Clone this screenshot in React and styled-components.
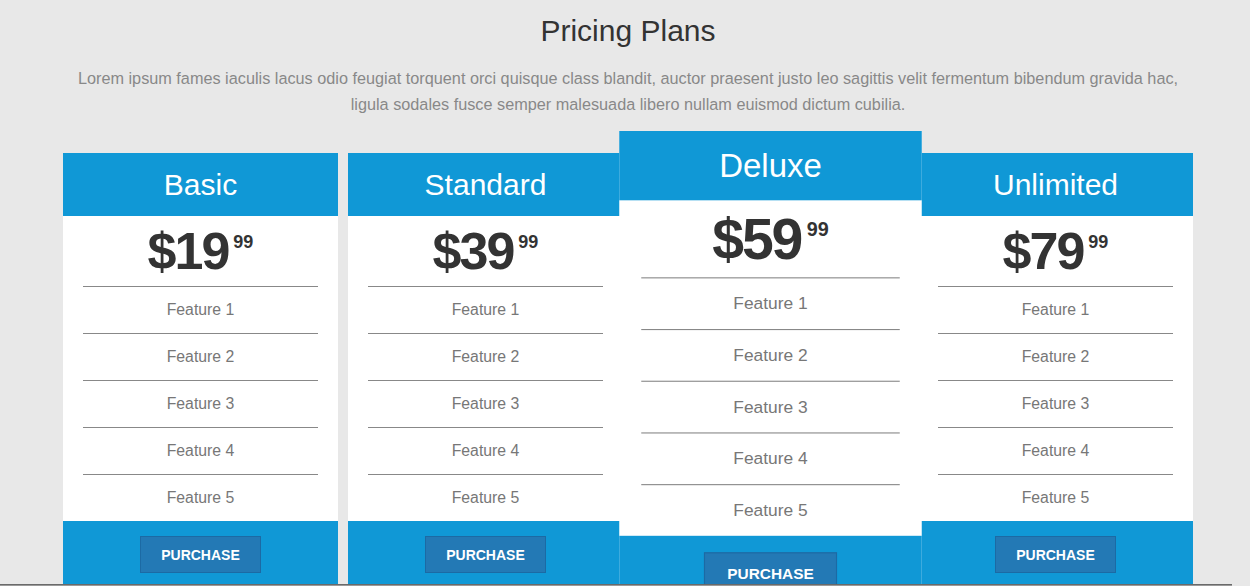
import React from "react";
import styled, { createGlobalStyle } from "styled-components";

const GlobalStyle = createGlobalStyle`
  html, body {
    margin: 0;
    padding: 0;
    overflow: hidden;
    background: #e8e8e8;
    font-family: "Liberation Sans", Arial, sans-serif;
  }
`;

const plans = [
  { name: "Basic", dollars: "19", cents: "99" },
  { name: "Standard", dollars: "39", cents: "99" },
  { name: "Deluxe", dollars: "59", cents: "99", featured: true },
  { name: "Unlimited", dollars: "79", cents: "99" }
];

const features = ["Feature 1", "Feature 2", "Feature 3", "Feature 4", "Feature 5"];

const App = () => {
  return (
    <>
      <GlobalStyle />
      <Page>
        <Title>Pricing Plans</Title>
        <Intro>
          Lorem ipsum fames iaculis lacus odio feugiat torquent orci quisque class blandit, auctor
          praesent justo leo sagittis velit fermentum bibendum gravida hac, ligula sodales fusce
          semper malesuada libero nullam euismod dictum cubilia.
        </Intro>
        <Plans>
          {plans.map(plan => (
            <Card key={plan.name} featured={plan.featured}>
              <CardHeader>{plan.name}</CardHeader>
              <PriceBox>
                <Dollars>${plan.dollars}</Dollars>
                <Cents>{plan.cents}</Cents>
              </PriceBox>
              <FeatureList>
                {features.map(f => (
                  <FeatureItem key={f}>{f}</FeatureItem>
                ))}
              </FeatureList>
              <CardFooter>
                <PurchaseButton>Purchase</PurchaseButton>
              </CardFooter>
            </Card>
          ))}
        </Plans>
      </Page>
      <BottomEdge />
    </>
  );
};

export default App;

const Page = styled.div`
  display: flex;
  flex-direction: column;
  align-items: center;
  padding: 13px 0 0 6px;
`;

const Title = styled.h1`
  margin: 0;
  font-size: 30px;
  line-height: 36px;
  font-weight: normal;
  color: #333;
`;

const Intro = styled.p`
  margin: 16px 0 0;
  max-width: 1120px;
  text-align: center;
  font-size: 16.25px;
  line-height: 26px;
  color: #888;
`;

const Plans = styled.div`
  display: flex;
  gap: 10px;
  margin-top: 36px;
`;

const Card = styled.div`
  width: 275px;
  height: 440px;
  display: flex;
  flex-direction: column;
  background: #fff;
  position: relative;
  z-index: ${p => (p.featured ? 2 : 0)};
  transform: ${p => (p.featured ? "scale(1.1)" : "none")};
`;

const CardHeader = styled.div`
  height: 63px;
  display: flex;
  align-items: center;
  justify-content: center;
  background: #1098d6;
  color: #fff;
  font-size: 30px;
`;

const PriceBox = styled.div`
  height: 70px;
  display: flex;
  align-items: center;
  justify-content: center;
  color: #333;
  font-weight: bold;
`;

const Dollars = styled.span`
  font-size: 52px;
  line-height: 52px;
  letter-spacing: -2px;
`;

const Cents = styled.span`
  align-self: flex-start;
  margin: 17px 0 0 5px;
  font-size: 18px;
  line-height: 18px;
`;

const FeatureList = styled.ul`
  list-style: none;
  margin: 0 20px;
  padding: 0;
`;

const FeatureItem = styled.li`
  height: 46px;
  border-top: 1px solid #888;
  display: flex;
  align-items: center;
  justify-content: center;
  font-size: 15.8px;
  color: #777;
`;

const CardFooter = styled.div`
  flex: 1;
  display: flex;
  justify-content: center;
  align-items: flex-start;
  padding-top: 15px;
  background: #1098d6;
`;

const PurchaseButton = styled.button`
  width: 121px;
  height: 37px;
  background: #2379b5;
  border: 1px solid #1c6aa4;
  border-radius: 0;
  color: #fff;
  font-family: "Liberation Sans", Arial, sans-serif;
  font-weight: bold;
  font-size: 14px;
  text-transform: uppercase;
  padding: 0;
  cursor: pointer;
`;

const BottomEdge = styled.div`
  position: fixed;
  left: 0;
  bottom: 0;
  width: 1232px;
  height: 1px;
  border-top: 1px solid #6a6a6a;
  background: #9a9a9a;
  z-index: 5;
`;
